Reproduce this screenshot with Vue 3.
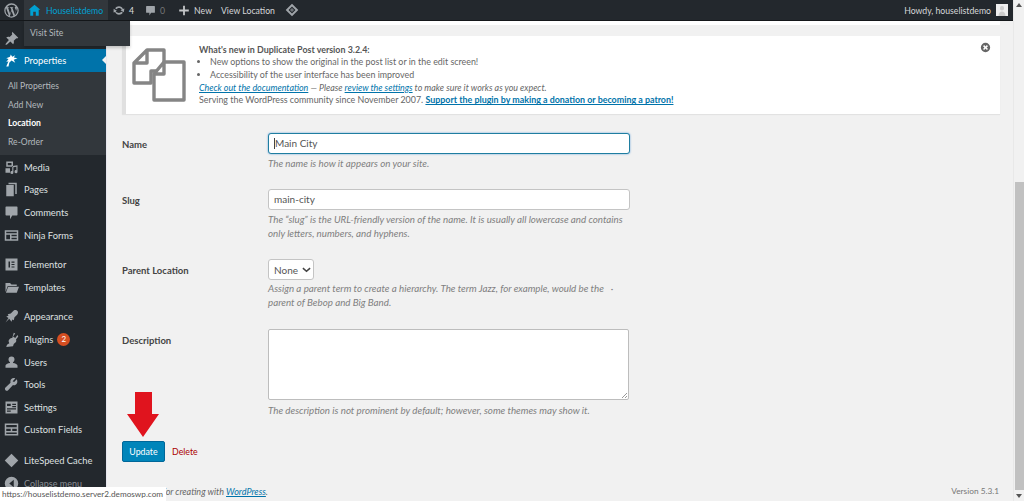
<script setup>
const wp = "M10 1.5a8.5 8.5 0 1 0 0 17 8.5 8.5 0 0 0 0-17zM3 10c0-1 .2-2 .6-2.9l3.4 9.2A7 7 0 0 1 3 10zm7 7c-.7 0-1.300-.1-2-.3l2.100-6.100 2.200 5.900A7 7 0 0 1 10 17zm1-10.300c.4 0 .8-.1.8-.1.4 0 .3-.6 0-.6 0 0-1.100.1-1.800.1s-1.800-.1-1.800-.1c-.4 0-.4.6 0 .6 0 0 .3.1.7.1l1 2.800-1.500 4.300L6 6.700c.4 0 .8-.1.800-.1.4 0 .3-.6 0-.6 0 0-1.100.1-1.800.1h-.4A7 7 0 0 1 15.200 5.300H15c-.7 0-1.100.6-1.100 1.200 0 .6.300 1 .700 1.600.3.500.6 1.100.6 2 0 .6-.2 1.300-.6 2.300l-.7 2.400zM16.200 6.700a7 7 0 0 1-2.600 9.300l2.100-6.200c.4-1 .5-1.800.5-2.500z";
const icons = {
  pin: "M11 1l8 8-1.500 1-1-.5-3.500 3.500c.5 2 .2 3.500-.8 4.500L8.500 14 4 18l-2 .5.500-2 4-4.500L3 8.800c1-1 2.500-1.300 4.500-.8L11 4.500l-.5-1z",
  prop: "M3 18l3-7-3 1 3-4-3-1 5-2 1-3 2 3 4-2-2 3 5 1-5 2 2 4-5-3-3 3-1 5z",
  media: "M3 2h9v7H3zM5 4v3h5V4zM11 8l7-1v8.500a2 2 0 1 1-1.500-1.900V9l-4 .6v7a2 2 0 1 1-1.500-1.900zM2 11h6v6H2z",
  pages: "M6 1h11v15h-2V3H6zM3 4h10v15H3z",
  comments: "M3 2h14a1 1 0 0 1 1 1v10a1 1 0 0 1-1 1h-6l-3 5v-5H3a1 1 0 0 1-1-1V3a1 1 0 0 1 1-1z",
  ninja: "M1 3h18v14H1zM3 5v2h14V5zM3 9v6h5V9zM10 9v2h7V9zM10 13v2h7v-2z",
  elementor: "M2 2h16v16H2zM6 6v8h2V6zM10 6v1.500h4V6zM10 9.200v1.600h4V9.200zM10 12.500V14h4v-1.500z",
  templates: "M2 4h6l2 2h7v2H5l-3 8zM5.500 9H20l-3 8H2.500z",
  appearance: "M13 2c2-1 4-.5 5 .5s1 3-.5 5L14 11l-1 4-2-1-1 3-3-4-5 5 4-6-3-2 3-1-1-2 4-1z",
  plugins: "M13 1l2 1-3 4 3 2 3-4 1 2-3 4c1 2 0 4-2 5l-1 1-1 3-9 1 1-3 3-2-1-3 1-2c1-2 3-2 4-2z",
  users: "M10 2a4 4 0 0 1 4 4c0 1.500-.8 3-2 3.500v1c3 .5 6 1.500 6 3.500v3H2v-3c0-2 3-3 6-3.500v-1C6.800 9 6 7.500 6 6a4 4 0 0 1 4-4z",
  tools: "M17 3l-3.500 3.500-2-1L15 2c-3-1.500-6.500.5-6.500 4 0 .5 0 1 .2 1.500L2 14c-1 1-1 2.500 0 3.500s2.500 1 3.500 0l6.500-6.700C15.500 12 19.500 8.500 17 3z",
  settings: "M2 2h16v16H2zM4 5v3h5V5zM11 5v1.500h5V5zM11 8v1.500h5V8zM4 11v1.500h12V11zM4 14v1.500h5V14z",
  fields: "M1 2h18v16H1zM3 4v3h14V4zM3 9v3h6V9zM11 9v3h6V9zM3 14v2h14v-2z",
  speed: "M10 1l9 9-9 9-9-9z",
  collapse: "M10 1a9 9 0 1 1 0 18 9 9 0 0 1 0-18zm3 4l-6 5 6 5z"
};
const groups = [
  { cls: "g1", items: [["Media","media"],["Pages","pages"],["Comments","comments"],["Ninja Forms","ninja"]] },
  { cls: "g2", items: [["Elementor","elementor"],["Templates","templates"]] },
  { cls: "g3", items: [["Appearance","appearance"],["Plugins","plugins",2],["Users","users"],["Tools","tools"],["Settings","settings"],["Custom Fields","fields"]] },
  { cls: "g4", items: [["LiteSpeed Cache","speed"]] }
];
const subs = ["All Properties","Add New","Location","Re-Order"];
</script>

<template>
  <div class="page">
    <div class="left">
      <header class="bar">
        <svg class="logo" viewBox="0 0 20 20"><path fill-rule="evenodd" :d="wp"/></svg>
        <div class="site">
          <svg class="ico home" viewBox="0 0 20 20"><path d="M10 1l9 8h-2.500v9H12v-6H8v6H3.500V9H1z"/></svg>
          <span>Houselistdemo</span>
        </div>
        <svg class="ico upd" viewBox="0 0 20 20"><path d="M10 3c3 0 5.500 1.800 6.500 4.500L19 6.500 18 13l-5.500-3.500 2-.8C13.800 7 12 6 10 6 8.500 6 7 6.800 6 8L3.500 6.200C5 4.300 7.300 3 10 3zM1 7l5.500 3.500-2 .8C5.200 13 8 14 10 14c1.500 0 3-.8 4-2l2.500 1.800C15 15.700 12.700 17 10 17c-3 0-5.500-1.800-6.500-4.500L1 13.500z"/></svg>
        <span class="num strong">4</span>
        <svg class="ico cmt" viewBox="0 0 20 20"><path :d="icons.comments"/></svg>
        <span class="num">0</span>
        <svg class="ico plus" viewBox="0 0 20 20"><path d="M8.500 2h3v6.500H18v3h-6.500V18h-3v-6.500H2v-3h6.500z"/></svg>
        <span class="new">New</span>
        <span class="view">View Location</span>
        <svg class="ico dia" viewBox="0 0 20 20"><path fill-rule="evenodd" d="M10 1l9 9-9 9-9-9zM10 5l-5 5 5 5 5-5z"/><path d="M10 7l3 3-3 3-3-3z" opacity=".6"/></svg>
        <span class="howdy">Howdy, houselistdemo</span>
        <span class="avatar"><svg viewBox="0 0 12 12"><path d="M6 2a2 2 0 0 1 2 2.200C8 5.500 7.200 6.500 6 6.500S4 5.500 4 4.200A2 2 0 0 1 6 2zM2.500 12c0-3 1.500-4.500 3.500-4.500S9.500 9 9.500 12z" fill="#ccc"/></svg></span>
      </header>

      <div class="body">
        <nav class="side">
          <div class="posts"><svg class="mi" viewBox="0 0 20 20"><path :d="icons.pin"/></svg></div>
          <div class="active">
            <svg class="mi" viewBox="0 0 20 20"><path :d="icons.prop"/></svg>
            <span>Properties</span>
          </div>
          <ul class="sub">
            <li v-for="s in subs" :key="s" :class="{ cur: s === 'Location' }">{{ s }}</li>
          </ul>
          <div v-for="g in groups" :key="g.cls" class="group" :class="g.cls">
            <div v-for="it in g.items" :key="it[0]" class="item">
              <svg class="mi" viewBox="0 0 20 20"><path fill-rule="evenodd" :d="icons[it[1]]"/></svg>
              <span>{{ it[0] }}</span>
              <b v-if="it[2]" class="badge">{{ it[2] }}</b>
            </div>
          </div>
          <div class="item collapse">
            <svg class="mi" viewBox="0 0 20 20"><path fill-rule="evenodd" :d="icons.collapse"/></svg>
            <span>Collapse menu</span>
          </div>
        </nav>

        <main class="main">
          <div class="prev"></div>
          <section class="notice">
            <svg class="dup" viewBox="0 0 54 54" fill="none" stroke="#858585" stroke-width="3.400" stroke-linejoin="round">
              <path d="M15 2h17v21H19v12H2V15zM15 2v13H2"/>
              <path d="M32 14h20v38H22V26zM32 14v12H22" fill="#fff"/>
            </svg>
            <div class="ntext">
              <h4>What's new in Duplicate Post version 3.2.4:</h4>
              <ul>
                <li>New options to show the original in the post list or in the edit screen!</li>
                <li>Accessibility of the user interface has been improved</li>
              </ul>
              <p class="it"><a>Check out the documentation</a> — Please <a>review the settings</a> to make sure it works as you expect.</p>
              <p>Serving the WordPress community since November 2007. <a class="bold">Support the plugin by making a donation or becoming a patron!</a></p>
            </div>
            <svg class="close" viewBox="0 0 20 20"><path fill="#666" fill-rule="evenodd" d="M10 1.500a8.500 8.500 0 1 1 0 17 8.500 8.500 0 0 1 0-17zM7.500 5.500l-2 2L8 10l-2.500 2.500 2 2L10 12l2.500 2.500 2-2L12 10l2.500-2.500-2-2L10 8z"/></svg>
          </section>

          <div class="form">
            <div class="row r-name">
              <label>Name</label>
              <div class="f">
                <div class="input focus"><i class="caret"></i>Main City</div>
                <p class="d">The name is how it appears on your site.</p>
              </div>
            </div>
            <div class="row r-slug">
              <label>Slug</label>
              <div class="f">
                <div class="input">main-city</div>
                <p class="d">The “slug” is the URL-friendly version of the name. It is usually all lowercase and contains only letters, numbers, and hyphens.</p>
              </div>
            </div>
            <div class="row r-parent">
              <label>Parent Location</label>
              <div class="f">
                <div class="select">None<svg viewBox="0 0 10 6" width="9" height="6"><path d="M1 1l4 3.500L9 1" fill="none" stroke="#444" stroke-width="1.700"/></svg></div>
                <p class="d">Assign a parent term to create a hierarchy. The term Jazz, for example, would be the &nbsp; ·<br>parent of Bebop and Big Band.</p>
              </div>
            </div>
            <div class="row r-desc">
              <label>Description</label>
              <div class="f">
                <div class="area"></div>
                <p class="d">The description is not prominent by default; however, some themes may show it.</p>
              </div>
            </div>
          </div>

          <div class="actions">
            <button class="btn">Update</button>
            <a class="del">Delete</a>
          </div>
          <footer class="foot">
            <span class="thanks">Thank you for creating with <a>WordPress</a>.</span>
            <span class="ver">Version 5.3.1</span>
          </footer>

          <svg class="arrow" viewBox="0 0 32 45"><path d="M8 0h17v22h7L16 45 0 22h8z" fill="#e0141e"/></svg>
        </main>
      </div>
    </div>

    <aside class="scroll">
      <span class="up"></span>
      <span class="thumb"></span>
      <span class="down"></span>
    </aside>

    <div class="fly">Visit Site</div>
    <div class="status">https://houselistdemo.server2.demoswp.com</div>
  </div>
</template>

<style>
html, body { margin: 0; background: #f1f1f1; }
</style>

<style scoped>
.page {
  position: relative; width: 1024px; height: 501px; overflow: hidden; display: flex;
  background: #f1f1f1; color: #444; font-family: Lato, "Open Sans", sans-serif; font-size: 9.350px;
}
.left { flex: 1; min-width: 0; display: flex; flex-direction: column; }
.bar {
  height: 20px; flex: none; background: #23282d; display: flex; align-items: center; color: #d5d7d9;
  border-bottom: 1px solid #14171a; font-size: 8.700px; box-sizing: content-box;
}
.logo { width: 17px; height: 17px; margin-left: 3px; fill: #a0a5aa; }
.site {
  width: 84px; height: 20px; margin-left: 4px; background: #32373c; color: #00a0d2;
  display: flex; align-items: center; padding-left: 3px; box-sizing: border-box;
}
.ico { width: 13px; height: 13px; fill: #a0a5aa; flex: none; }
.home { fill: #00a0d2; margin-right: 5px; margin-left: 1px; }
.upd { margin-left: 5px; width: 12px; }
.num { margin-left: 4px; }
.strong { color: #ddd; }
.cmt { margin-left: 11px; width: 11px; }
.num:not(.strong) { color: #777; margin-left: 4px; }
.plus { margin-left: 13px; width: 12px; fill: #c4c6c8; }
.new { margin-left: 4px; }
.view { margin-left: 9px; }
.dia { margin-left: 10px; width: 14px; height: 14px; }
.howdy { margin-left: auto; }
.avatar { width: 12px; height: 12px; margin: 0 5px; background: #eee; display: block; }
.avatar svg { display: block; }

.body { flex: 1; min-height: 0; display: flex; }
.side { width: 107px; flex: none; background: #23282d; color: #dfe0e1; display: flex; flex-direction: column; white-space: nowrap; }
.mi { width: 15px; height: 15px; flex: none; fill: #a0a5aa; margin: 0 5px 0 4px; }
.posts { height: 28px; display: flex; align-items: center; padding-top: 6px; box-sizing: border-box; }
.active {
  position: relative; height: 23px; background: #0073aa; color: #fff; display: flex; align-items: center;
}
.active .mi { fill: #fff; }
.active::after {
  content: ""; position: absolute; right: 0; top: 6px; border: 5px solid transparent; border-right-color: #f1f1f1; border-left: 0;
}
.sub { margin: 0; padding: 5px 0 0; height: 83px; box-sizing: border-box; list-style: none; background: #32373c; color: #b4b9be; font-size: 8.600px; }
.sub li { height: 18.500px; line-height: 18.500px; padding-left: 8px; }
.sub li.cur { color: #fff; font-weight: 700; }
.group { display: flex; flex-direction: column; }
.g1 { margin-top: 1px; }
.g2 { margin-top: 7.300px; }
.g3 { margin-top: 6.800px; }
.g4 { margin-top: 8.400px; }
.item { height: 22.600px; display: flex; align-items: center; flex: none; }
.badge {
  width: 13px; height: 13px; margin-left: 4px; border-radius: 50%; background: #d54e21; color: #fff;
  font-size: 8px; font-weight: 400; text-align: center; line-height: 13px;
}
.collapse { color: #8b8f94; font-size: 9px; }

.main { position: relative; flex: 1; min-width: 0; padding-left: 15px; padding-right: 13px; box-sizing: border-box; border-left: 1px solid #e6e6ee; margin-left: -1px; }
.prev { height: 4px; margin-left: 7px; background: #fff; }
.notice {
  position: relative; height: 78px; margin-top: 11px; background: #fff; border-left: 4px solid #e0e0e0;
  box-sizing: border-box; display: flex; box-shadow: 0 1px 1px rgba(0,0,0,.06); font-size: 8.900px; color: #666;
}
.dup { width: 54px; height: 54px; margin: 12px 0 0 6px; flex: none; }
.ntext { margin-left: 13px; padding-top: 6.500px; line-height: 12.800px; }
.ntext h4 { margin: 0; font-size: 8.900px; font-weight: 700; color: #555; line-height: 13px; }
.ntext ul { margin: .5px 0 0; padding-left: 11px; }
.ntext p { margin: 0; }
.ntext a { color: #0073aa; text-decoration: underline; }
.ntext .bold { font-weight: 700; }
.it { font-style: italic; }
.close { position: absolute; right: 9px; top: 6px; width: 11px; height: 11px; }

.row { display: flex; }
.row label { width: 146px; flex: none; font-weight: 700; font-size: 9.500px; color: #444; padding-top: 6px; }
.f { width: 362px; }
.form { margin-top: 19px; }
.r-name { height: 56px; }
.r-slug { height: 70px; }
.r-parent { height: 70px; }
.input {
  height: 21px; box-sizing: border-box; background: #fff; border: 1px solid #c4c4c4; border-radius: 3px;
  padding-left: 5px; line-height: 19px; font-size: 10px; color: #555; position: relative;
}
.focus { border: 1.500px solid #1f7ea0; box-shadow: 0 0 2px #5b9dd9; line-height: 18px; }
.caret { display: inline-block; width: 1px; height: 11px; background: #444; vertical-align: -2px; }
.d { margin: 2px 0 0; font-style: italic; color: #808080; font-size: 9.750px; line-height: 14px; }
.r-parent .d { margin-top: 1px; }
.select {
  width: 46px; height: 21px; box-sizing: border-box; background: #fff; border: 1px solid #c4c4c4; border-radius: 3px;
  display: flex; align-items: center; gap: 4px; padding-left: 5px; font-size: 10px; color: #555;
}
.area {
  position: relative; width: 361px; height: 71px; box-sizing: border-box; background: #fff; border: 1px solid #bdbdbd; border-radius: 2px;
}
.area::after {
  content: ""; position: absolute; right: 1px; bottom: 1px; width: 6px; height: 6px;
  background: linear-gradient(135deg, transparent 50%, #999 50%, #999 60%, transparent 60%, transparent 75%, #999 75%, #999 85%, transparent 85%);
}
.r-desc .d { margin-top: 3px; }
.actions { margin-top: 24px; display: flex; align-items: center; }
.btn {
  width: 43px; height: 21px; padding: 0; border: 1px solid #006799; border-radius: 2px; background: #0085ba; color: #fff;
  font: inherit; font-size: 8.800px;
}
.del { margin-left: 7px; color: #a00; font-size: 8.800px; }
.foot { margin-top: 24px; display: flex; justify-content: space-between; font-size: 9px; color: #777; margin-right: 1px; }
.ver { font-size: 8.300px; }
.thanks { font-style: italic; color: #666; }
.thanks a { color: #0073aa; text-decoration: underline; }

.arrow { position: absolute; left: 20px; top: 371px; width: 32px; height: 45px; }

.scroll { width: 11px; flex: none; position: relative; background: #f1f1f1; border-left: 1px solid #e8e8e8; box-sizing: border-box; display: flex; flex-direction: column; align-items: center; }
.up { margin-top: 3px; border: 3px solid transparent; border-bottom: 4px solid #555; border-top: 0; }
.thumb { width: 9px; height: 308px; margin-top: 175px; background: #c1c1c1; }
.down { margin-top: 4px; border: 3px solid transparent; border-top: 4px solid #555; border-bottom: 0; }

.fly {
  position: absolute; left: 24px; top: 21px; width: 106px; height: 25px; box-sizing: border-box; padding: 7px 0 0 6px;
  background: #32373c; color: #b4b9be; font-size: 8.600px; box-shadow: 0 2px 3px rgba(0,0,0,.2);
}
.status {
  position: absolute; left: 0; bottom: 0; height: 14px; width: 166px; background: #fff; color: #555;
  font-size: 8.200px; line-height: 14px; padding-left: 2px; box-sizing: border-box; white-space: nowrap; overflow: hidden;
}
</style>
